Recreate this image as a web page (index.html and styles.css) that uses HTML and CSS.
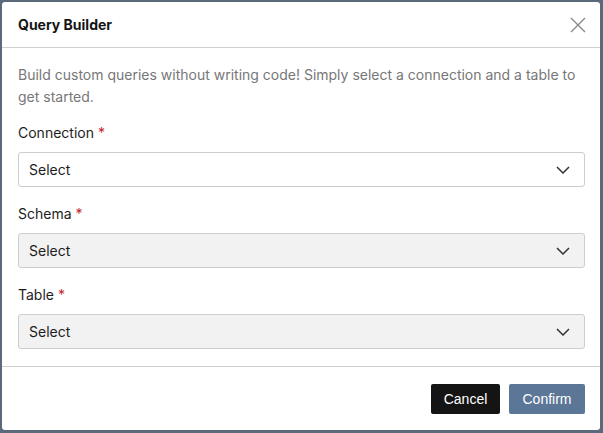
FILE: index.html
```html
<!DOCTYPE html>
<html lang="en">
<head>
<meta charset="utf-8">
<title>Query Builder</title>
<link rel="stylesheet" href="styles.css">
</head>
<body>
<div class="dialog">
  <div class="header">
    <h2 class="title">Query Builder</h2>
    <button class="close" aria-label="Close">
      <svg width="16" height="16" viewBox="0 0 16 16"><path d="M1 1L15 15M15 1L1 15" stroke="#8a8a8a" stroke-width="1.4" fill="none"/></svg>
    </button>
  </div>
  <div class="body">
    <p class="desc">Build custom queries without writing code! Simply select a connection and a table to get started.</p>
    <div class="field">
      <label class="label">Connection <span class="req">*</span></label>
      <div class="select">
        <span>Select</span>
        <svg class="chev" width="14" height="8" viewBox="0 0 14 8"><path d="M1 1L7 7L13 1" stroke="#333" stroke-width="1.5" fill="none"/></svg>
      </div>
    </div>
    <div class="field">
      <label class="label">Schema <span class="req">*</span></label>
      <div class="select disabled">
        <span>Select</span>
        <svg class="chev" width="14" height="8" viewBox="0 0 14 8"><path d="M1 1L7 7L13 1" stroke="#333" stroke-width="1.5" fill="none"/></svg>
      </div>
    </div>
    <div class="field">
      <label class="label">Table <span class="req">*</span></label>
      <div class="select disabled">
        <span>Select</span>
        <svg class="chev" width="14" height="8" viewBox="0 0 14 8"><path d="M1 1L7 7L13 1" stroke="#333" stroke-width="1.5" fill="none"/></svg>
      </div>
    </div>
  </div>
  <div class="footer">
    <button class="btn cancel">Cancel</button>
    <button class="btn confirm">Confirm</button>
  </div>
</div>
</body>
</html>
```
FILE: styles.css
```css
html, body {
  margin: 0;
  padding: 0;
}
body {
  background: #5b6a7b;
  width: 603px;
  height: 433px;
  overflow: hidden;
  font-family: Inter, "Noto Sans", sans-serif;
  color: #1d1d1d;
}
.dialog {
  margin: 2px 3px 0 2px;
  height: 428px;
  background: #fff;
  border-radius: 3px;
  display: flex;
  flex-direction: column;
}
.header {
  height: 45px;
  border-bottom: 1px solid #cfcfcf;
  display: flex;
  align-items: center;
  justify-content: space-between;
  padding: 0 14px 0 16px;
}
.title {
  margin: 0;
  font-size: 14px;
  font-weight: 700;
  color: #151515;
}
.close {
  border: 0;
  background: none;
  padding: 0;
  width: 16px;
  height: 16px;
  display: flex;
}
.body {
  flex: 1;
  padding: 16px 15px 0 16px;
  border-bottom: 1px solid #cfcfcf;
}
.desc {
  margin: 0 0 15px;
  font-size: 14px;
  line-height: 22px;
  color: #777;
}
.field {
  margin-bottom: 17px;
}
.label {
  display: block;
  font-size: 14px;
  line-height: 20px;
  color: #1d1d1d;
  margin-bottom: 9px;
}
.req {
  color: #c0262d;
}
.select {
  height: 33px;
  border: 1px solid #cdcdcd;
  border-radius: 3px;
  background: #fff;
  display: flex;
  align-items: center;
  justify-content: space-between;
  padding: 0 14px 0 10px;
  font-size: 14px;
  color: #1d1d1d;
}
.select.disabled {
  background: #f2f2f2;
}
.footer {
  height: 63px;
  display: flex;
  align-items: center;
  justify-content: flex-end;
  gap: 9px;
  padding: 0 15px 0 16px;
}
.btn {
  height: 30px;
  border: 0;
  border-radius: 2px;
  font-family: "Liberation Sans", Arial, sans-serif;
  font-size: 14px;
  color: #fff;
  padding: 0 12px;
}
.cancel {
  background: #141414;
  width: 69px;
}
.confirm {
  background: #5c7698;
  width: 76px;
}
```
